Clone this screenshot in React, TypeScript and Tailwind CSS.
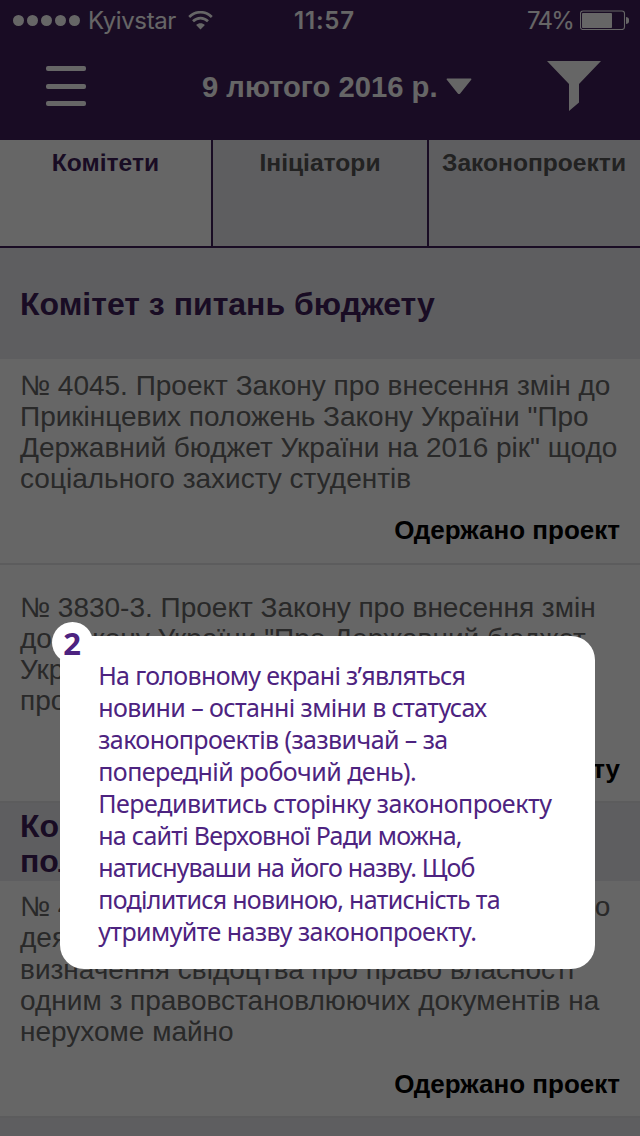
import type { ReactNode } from "react";

function StatusBar() {
  return (
    <div className="grid h-10 grid-cols-[294px_1fr_113px] items-center font-[Inter,sans-serif] text-2xl leading-8 text-white">
      <div className="flex items-center pl-[13px]">
        <div className="flex gap-[3px] pt-px">
          {[0, 1, 2, 3, 4].map((dot) => (
            <span key={dot} className="size-[11px] rounded-full bg-white" />
          ))}
        </div>
        <span className="ml-2 w-[88px] whitespace-nowrap pt-[2px] tracking-[-0.4px]">Kyivstar</span>
        <svg className="ml-[12px]" width="26" height="19" viewBox="0 0 26 19" fill="none">
          <path d="M1.2 6C8 -0.4 17 -0.4 23.8 6" stroke="white" strokeWidth="2.7" />
          <path d="M5 10.2C9.5 6 15.5 6 20 10.2" stroke="white" strokeWidth="2.7" />
          <path d="M12.5 18.6L8.1 14.1C10.7 11.7 14.3 11.7 16.9 14.1Z" fill="white" />
        </svg>
      </div>
      <span className="whitespace-nowrap pt-[2px] font-semibold tracking-[0.8px]">11:57</span>
      <div className="flex items-center">
        <span className="w-[46px] whitespace-nowrap pt-[2px] tracking-[-1.7px]">74%</span>
        <svg className="ml-[7px]" width="50" height="20" viewBox="0 0 50 20">
          <rect x="0.5" y="1" width="44" height="18.5" rx="2.5" fill="none" stroke="white" strokeWidth="1.1" />
          <rect x="2" y="3" width="30" height="15" rx="0.8" fill="white" />
          <path d="M46 7C48.8 7.2 49 8.8 49 10.5C49 12.2 48.8 13.8 46 14Z" fill="white" />
        </svg>
      </div>
    </div>
  );
}

function NavBar() {
  return (
    <div className="flex h-[100px] items-start text-white">
      <div className="ml-[46px] mt-[26px] flex w-10 flex-col gap-[12.5px]">
        <span className="h-[5px] rounded-[2px] bg-white" />
        <span className="h-[5px] rounded-[2px] bg-white" />
        <span className="h-[5px] rounded-[2px] bg-white" />
      </div>
      <div className="ml-[116px] mt-[31px] w-[244px] whitespace-nowrap text-[29.2px] font-bold leading-8">
        9 лютого 2016 р.
      </div>
      <svg className="mt-[38px]" width="26" height="17" viewBox="0 0 26 17">
        <path d="M1 0.4H25Q26 1 25 2L14.2 15.4Q13 16.6 11.8 15.4L1 2Q0 1 1 0.4Z" fill="white" />
      </svg>
      <svg className="ml-[75px] mt-[21px]" width="54" height="50" viewBox="0 0 54 50">
        <path d="M0 0H54L32 23V41.5L22 50V23Z" fill="white" />
      </svg>
    </div>
  );
}

function Tabs() {
  return (
    <div className="grid h-[108px] grid-cols-[213px_216px_211px] border-b-2 border-[#3f1e5a] bg-[#ebebf0] text-center text-[24.6px] font-bold leading-[30px] text-[#555]">
      <div className="border-r-2 border-[#3f1e5a] bg-white pt-2 text-[#3f1e5a]">Комітети</div>
      <div className="border-r-2 border-[#3f1e5a] pt-2">Ініціатори</div>
      <div className="whitespace-nowrap pr-px pt-2">Законопроекти</div>
    </div>
  );
}

function Lines({ lines }: { lines: string[] }) {
  return (
    <>
      {lines.map((line) => (
        <div key={line} className="whitespace-nowrap">{line}</div>
      ))}
    </>
  );
}

function Item({ lines, status, className }: { lines: string[]; status: ReactNode; className: string }) {
  return (
    <div className={"flex flex-col border-b-2 border-[#e6e6e9] bg-white px-5 text-[28px] text-[#666] " + className}>
      <Lines lines={lines} />
      <div className="whitespace-nowrap text-right text-[26px] font-bold leading-[30px] text-black">{status}</div>
    </div>
  );
}

const hint: [string, string][] = [
  ["На головному екрані з’являться", "tracking-[-0.67px]"],
  ["новини – останні зміни в статусах", "tracking-[-0.6px]"],
  ["законопроектів (зазвичай – за", "tracking-[-0.57px]"],
  ["попередній робочий день).", "tracking-[-0.5px]"],
  ["Передивитись сторінку законопроекту", "tracking-[-0.46px]"],
  ["на сайті Верховної Ради можна,", "tracking-[-0.72px]"],
  ["натиснуваши на його назву. Щоб", "tracking-[-0.88px]"],
  ["поділитися новиною, натисність та", "tracking-[-0.7px]"],
  ["утримуйте назву законопроекту.", "tracking-[-0.56px]"],
];

function Hint() {
  return (
    <div className="absolute left-[59.7px] top-[636px] h-[333px] w-[535.6px] rounded-[24px] bg-white pl-[38.5px] pt-[23px] font-['Noto_Sans',sans-serif] text-[25px] leading-8 text-[#4d2380]">
      <div className="absolute left-[-8.2px] top-[-14.2px] flex size-[41px] items-center justify-center rounded-full bg-white text-[31px] font-bold">
        <span className="pt-[2px]">2</span>
      </div>
      {hint.map(([text, tracking]) => (
        <div key={text} className={"whitespace-nowrap " + tracking}>{text}</div>
      ))}
    </div>
  );
}

export default function App() {
  return (
    <div className="relative h-[1136px] w-[640px] overflow-hidden bg-[#ebebf0] font-['Liberation_Sans',Arial,sans-serif]">
      <header className="h-[140px] bg-[#3f1e5a]">
        <StatusBar />
        <NavBar />
      </header>
      <Tabs />
      <h2 className="flex h-[111px] items-center px-5 pt-[2px] text-[32px] font-bold leading-[35px] text-[#3f1e5a]">
        Комітет з питань бюджету
      </h2>
      <Item
        className="h-[206px] pt-[11px] leading-[31px] [&>*:last-child]:mt-[21px]"
        lines={[
          "№ 4045. Проект Закону про внесення змін до",
          "Прикінцевих положень Закону України \"Про",
          "Державний бюджет України на 2016 рік\" щодо",
          "соціального захисту студентів",
        ]}
        status="Одержано проект"
      />
      <Item
        className="h-[238px] pt-[27px] leading-[31px] [&>*:last-child]:mt-[38px]"
        lines={[
          "№ 3830-3. Проект Закону про внесення змін",
          "до Закону України \"Про Державний бюджет",
          "України на 2016 рік\" щодо",
          "проведення видатків",
        ]}
        status="Направлено до комітету"
      />
      <h2 className="h-[78px] px-5 pt-[6px] text-[32px] font-bold leading-[35px] text-[#3f1e5a]">
        <Lines lines={["Комітет з питань правової", "політики та правосуддя"]} />
      </h2>
      <Item
        className="h-[237px] pt-[10px] leading-[31.3px] [&>*:last-child]:mt-[22px]"
        lines={[
          "№ 4038. Проект Закону про внесення змін до",
          "деяких законодавчих актів України щодо",
          "визначення свідоцтва про право власності",
          "одним з правовстановлюючих документів на",
          "нерухоме майно",
        ]}
        status="Одержано проект"
      />
      <div className="absolute inset-0 bg-black/60" />
      <Hint />
    </div>
  );
}
